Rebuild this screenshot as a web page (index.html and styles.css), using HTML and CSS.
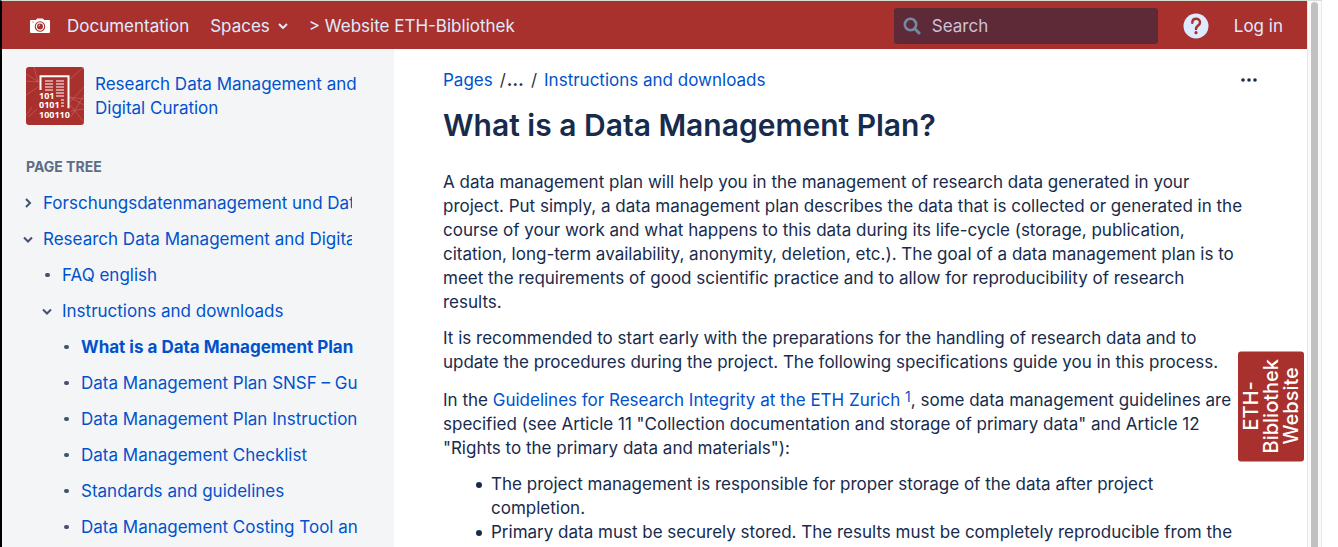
FILE: index.html
```html
<!DOCTYPE html>
<html lang="en">
<head>
<meta charset="utf-8">
<title>What is a Data Management Plan?</title>
<link rel="stylesheet" href="styles.css">
</head>
<body>
<div class="window">
  <div class="page">
    <header class="header">
      <nav class="nav">
        <a class="brand" href="#">
          <svg width="22" height="16" viewBox="0 0 22 16" aria-hidden="true">
            <path fill="#fff" d="M2 2h5l1-1.500h6L15 2h5q1 0 1 1v11q0 1-1 1H2q-1 0-1-1V3q0-1 1-1z"/>
            <circle cx="11" cy="8.500" r="4.700" fill="none" stroke="#a9312d" stroke-width="1.100"/>
            <circle cx="11" cy="8.500" r="3" fill="#a9312d"/>
            <path d="M9.600 8.300a1.500 1.500 0 0 1 1.400-1.300" fill="none" stroke="#fff" stroke-width=".7"/>
            <rect x="3" y="3.500" width="2" height="1" fill="#d9a09e"/>
          </svg>
          <span>Documentation</span>
        </a>
        <button class="nav-button" type="button">Spaces
          <svg width="10" height="6" viewBox="0 0 10 6" aria-hidden="true"><path d="M1 1l4 4 4-4" fill="none" stroke="currentColor" stroke-width="2"/></svg>
        </button>
        <a class="nav-link" href="#">&gt; Website ETH-Bibliothek</a>
      </nav>
      <div class="tools">
        <label class="search">
          <svg width="18" height="18" viewBox="0 0 18 18" aria-hidden="true"><circle cx="7.500" cy="7.500" r="5.700" fill="none" stroke="#7488a2" stroke-width="2.600"/><path d="M11.800 11.800l4.200 4.200" stroke="#7488a2" stroke-width="3" stroke-linecap="round"/></svg>
          <input class="search-input" type="search" placeholder="Search" aria-label="Search">
        </label>
        <button class="help" type="button" aria-label="Help">
          <svg width="26" height="26" viewBox="0 0 26 26" aria-hidden="true"><circle cx="13" cy="13" r="12.500" fill="#deebff"/><path d="M9.300 9.800C9.300 4.300 17 4.500 17 9.500c0 3-4 3-4 6.500" fill="none" stroke="#a9312d" stroke-width="2.500" stroke-linecap="round"/><circle cx="13" cy="19.700" r="1.600" fill="#a9312d"/></svg>
        </button>
        <a class="nav-link" href="#">Log in</a>
      </div>
    </header>
    <div class="columns">
      <aside class="sidebar">
        <a class="space" href="#">
          <svg class="space-logo" width="58" height="58" viewBox="0 0 58 58" aria-hidden="true">
            <rect width="58" height="58" rx="3" fill="#a9312d"/>
            <g stroke="#d98f8c" stroke-width=".6" opacity=".6" fill="none">
              <path d="M0 7l13 8M0 14l12 1L8 0M0 28l12-8M43 30l15 2M44 35l14-15M44 38l14 17M45 44l13-2M43 30l15 8M45 50L58 28M6 40l-6 9M2 50l9-8M44 12L58 0"/>
            </g>
            <path d="M14.500 23V9.300h28v32" fill="none" stroke="#fff" stroke-width="2"/>
            <path d="M19 14h8M19 17h8M19 20h8M19 23h8M30 14h8M30 17h8M30 20h8M30 23h8M30 26h8M30 29h8M35 33h3M35 36h3M35 39h3" stroke="#fff" stroke-width="1.100"/>
            <g fill="#fff" class="logo-digits"><text x="13" y="32">101</text><text x="13" y="41">0101</text><text x="13" y="51">100110</text></g>
          </svg>
          <span>Research Data Management and Digital Curation</span>
        </a>
        <h2 class="tree-title">Page tree</h2>
        <ul class="tree">
          <li><div class="row"><button class="toggle" type="button" aria-label="Expand"><svg width="8" height="10" viewBox="0 0 8 10"><path d="M2 1l4 4-4 4" fill="none" stroke="currentColor" stroke-width="2"/></svg></button><a href="#">Forschungsdatenmanagement und Datenerhalt</a></div></li>
          <li><div class="row"><button class="toggle" type="button" aria-label="Collapse"><svg width="10" height="7" viewBox="0 0 10 7"><path d="M1 1.500l4 4 4-4" fill="none" stroke="currentColor" stroke-width="2"/></svg></button><a href="#">Research Data Management and Digital Curation</a></div>
            <ul class="tree branch">
              <li><div class="row"><span class="dot"></span><a href="#">FAQ english</a></div></li>
              <li><div class="row"><button class="toggle" type="button" aria-label="Collapse"><svg width="10" height="7" viewBox="0 0 10 7"><path d="M1 1.500l4 4 4-4" fill="none" stroke="currentColor" stroke-width="2"/></svg></button><a href="#">Instructions and downloads</a></div>
                <ul class="tree branch">
                  <li><div class="row"><span class="dot"></span><a class="current" href="#">What is a Data Management Plan</a></div></li>
                  <li><div class="row"><span class="dot"></span><a href="#">Data Management Plan SNSF – Guidelines</a></div></li>
                  <li><div class="row"><span class="dot"></span><a href="#">Data Management Plan Instructions</a></div></li>
                  <li><div class="row"><span class="dot"></span><a href="#">Data Management Checklist</a></div></li>
                  <li><div class="row"><span class="dot"></span><a href="#">Standards and guidelines</a></div></li>
                  <li><div class="row"><span class="dot"></span><a href="#">Data Management Costing Tool and Checklist</a></div></li>
                </ul>
              </li>
            </ul>
          </li>
        </ul>
      </aside>
      <main class="main">
        <div class="topline">
          <nav class="crumbs" aria-label="Breadcrumbs"><a href="#">Pages</a><span class="more-crumbs">/<b>…</b></span><span>/</span><a href="#">Instructions and downloads</a></nav>
          <button class="more" type="button" aria-label="More"><svg width="16" height="4" viewBox="0 0 16 4"><g fill="currentColor"><circle cx="2" cy="2" r="1.800"/><circle cx="8" cy="2" r="1.800"/><circle cx="14" cy="2" r="1.800"/></g></svg></button>
        </div>
        <h1 class="title">What is a Data Management Plan?</h1>
        <div class="content">
          <p>A data management plan will help you in the management of research data generated in your project. Put simply, a data management plan describes the data that is collected or generated in the course of your work and what happens to this data during its life-cycle (storage, publication, citation, long-term availability, anonymity, deletion, etc.). The goal of a data management plan is to meet the requirements of good scientific practice and to allow for reproducibility of research results.</p>
          <p>It is recommended to start early with the preparations for the handling of research data and to update the procedures during the project. The following specifications guide you in this process.</p>
          <p class="with-note">In the <a href="#">Guidelines for Research Integrity at the ETH Zurich <sup>1</sup></a>, some data management guidelines are specified (see Article 11 "Collection documentation and storage of primary data" and Article 12 "Rights to the primary data and materials"):</p>
          <ul class="bullets">
            <li>The project management is responsible for proper storage of the data after project completion.</li>
            <li>Primary data must be securely stored. The results must be completely reproducible from the primary data.</li>
          </ul>
        </div>
      </main>
    </div>
    <a class="side-tab" href="#">ETH-<br>Bibliothek<br>Website</a>
  </div>
  <div class="scrollbar"><div class="thumb"></div></div>
</div>
</body>
</html>
```
FILE: styles.css
```css
* { box-sizing: border-box; }
body {
  margin: 0;
  background: #fff;
  color: #172b4d;
  font: 17px/24px Inter, "Liberation Sans", sans-serif;
}
a { color: #0052cc; text-decoration: none; }
button { border: 0; padding: 0; background: none; color: inherit; font: inherit; }
svg { display: block; flex: none; }

.window {
  display: flex;
  height: 100vh;
  overflow: hidden;
  margin-right: 16px;
  border-left: 2px solid #000;
  border-top: 1px solid #d3e0d3;
}
.page { position: relative; display: flex; flex: 1; flex-direction: column; min-width: 0; }

.header {
  display: flex;
  flex: none;
  align-items: center;
  justify-content: space-between;
  height: 48px;
  padding: 1px 24px 0 27px;
  background: #a9312d;
  color: #deebff;
}
.nav, .tools, .brand, .nav-button { display: flex; align-items: center; }
.nav { gap: 21px; }
.header a { color: inherit; }
.brand { gap: 16px; }
.nav-button { gap: 8px; }
.search {
  display: flex;
  align-items: center;
  gap: 11px;
  width: 264px;
  height: 36px;
  padding: 0 9px;
  border-radius: 3px;
  background: #5e2a37;
}
.search-input {
  width: 100%;
  min-width: 0;
  padding: 0;
  border: 0;
  outline: 0;
  background: none;
  color: #deebff;
  font: inherit;
}
.search-input::placeholder { color: #ccc3d8; opacity: 1; }
.help { margin: 0 25px; }

.columns { display: flex; flex: 1; min-height: 0; }
.sidebar { flex: none; width: 392px; overflow: hidden; padding: 18px 36px 0 24px; background: #f4f5f7; }
.space { display: flex; gap: 11px; padding-bottom: 30px; }
.space span { padding-top: 5px; }
.logo-digits { font: 700 9px "Open Sans", sans-serif; }
.tree-title { margin: 0 0 6px; color: #5e6c84; font-size: 14px; line-height: 24px; font-weight: 700; text-transform: uppercase; }
.tree { margin: 0; padding: 0; list-style: none; }
.row { display: grid; grid-template-columns: 17px minmax(0, 1fr); align-items: center; height: 36px; margin-right: 6px; color: #42526e; }
.row a { overflow: hidden; white-space: nowrap; }
.toggle { display: grid; place-items: center; width: 16px; height: 16px; margin-left: -6px; }
.dot { width: 5px; height: 4px; border-radius: 2px; background: #42526e; }
.branch { padding-left: 19px; }
.branch .row { margin-right: 0; }
.row a.current { font-weight: 700; }

.main { flex: 1; min-width: 0; overflow: hidden; padding: 19px 50px 0 49px; }
.topline { display: flex; align-items: center; justify-content: space-between; }
.crumbs { display: flex; gap: 7px; color: #333; }
.more-crumbs b { margin-left: 1px; }
.title { margin: 16px 0 28px; font-size: 30px; line-height: 34px; font-weight: 600; }
.content { padding-right: 12px; }
.content p { margin: 0 0 12px; }
.content .with-note { padding-top: 2px; }
.content sup { font-size: 14px; line-height: 0; vertical-align: 4px; }
.bullets { margin: 0; padding-left: 33px; list-style: none; }
.bullets li { display: grid; grid-template-columns: 15px 1fr; }
.bullets li::before { content: ""; width: 6px; height: 6px; margin-top: 10px; border-radius: 50%; background: currentColor; }
.side-tab {
  position: absolute;
  top: 350px;
  right: 3px;
  padding: 8px 3px;
  border-radius: 3px;
  background: #a9312d;
  color: #fff;
  font-size: 20px;
  font-weight: 500;
  line-height: 20px;
  text-align: center;
  writing-mode: vertical-rl;
  transform: rotate(180deg);
}
.scrollbar { flex: none; width: 15px; padding: 1px 3px 0; border: solid #e8e8e8; border-width: 0 1px; background: #fafafa; }
.thumb { height: 100%; border-radius: 4px 4px 0 0; background: #c1c1c1; }
```
